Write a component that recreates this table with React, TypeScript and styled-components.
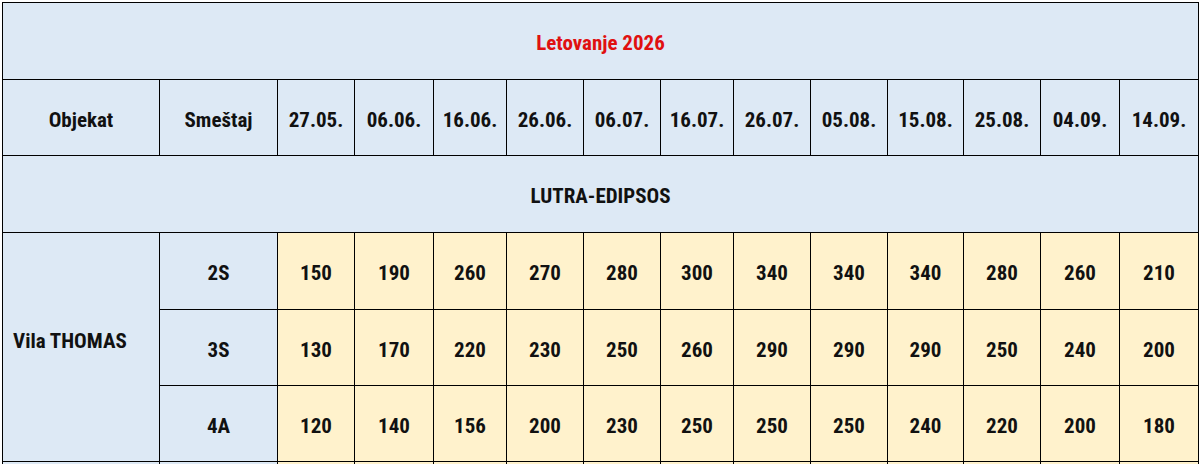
import React from 'react'
import styled, { createGlobalStyle } from 'styled-components'

const dates = ['27.05.', '06.06.', '16.06.', '26.06.', '06.07.', '16.07.', '26.07.', '05.08.', '15.08.', '25.08.', '04.09.', '14.09.']
const dateWidths = [77, 79, 73, 77, 77, 73, 77, 77, 76, 77, 79, 79]

const rooms = [
  { name: '2S', prices: [150, 190, 260, 270, 280, 300, 340, 340, 340, 280, 260, 210] },
  { name: '3S', prices: [130, 170, 220, 230, 250, 260, 290, 290, 290, 250, 240, 200] },
  { name: '4A', prices: [120, 140, 156, 200, 230, 250, 250, 250, 240, 220, 200, 180] },
]

function App(): JSX.Element {
  return (
    <>
      <GlobalStyle />
      <S.Page>
        <S.Table>
          <colgroup>
            <S.Col $w={157} />
            <S.Col $w={118} />
            {dateWidths.map((w, i) => (
              <S.Col key={i} $w={w} />
            ))}
          </colgroup>
          <tbody>
            <S.Row $h={77}>
              <S.TitleCell colSpan={14}>Letovanje 2026</S.TitleCell>
            </S.Row>
            <S.Row $h={76}>
              <S.HeadCell>Objekat</S.HeadCell>
              <S.HeadCell>Smeštaj</S.HeadCell>
              {dates.map(d => (
                <S.HeadCell key={d}>{d}</S.HeadCell>
              ))}
            </S.Row>
            <S.Row $h={77}>
              <S.HeadCell colSpan={14}>LUTRA-EDIPSOS</S.HeadCell>
            </S.Row>
            {rooms.map((room, idx) => (
              <S.Row key={room.name} $h={idx === 0 ? 77 : 76}>
                {idx === 0 && <S.HotelCell rowSpan={3}>Vila THOMAS</S.HotelCell>}
                <S.HeadCell>{room.name}</S.HeadCell>
                {room.prices.map((p, i) => (
                  <S.PriceCell key={i}>{p}</S.PriceCell>
                ))}
              </S.Row>
            ))}
            <S.Row $h={76}>
              <S.HeadCell />
              <S.HeadCell />
              {dates.map(d => (
                <S.PriceCell key={d} />
              ))}
            </S.Row>
          </tbody>
        </S.Table>
      </S.Page>
    </>
  )
}

const GlobalStyle = createGlobalStyle`
  html, body {
    margin: 0;
    padding: 0;
    background: #fff;
  }
  body {
    font-family: "Roboto Condensed", "Liberation Sans Narrow", "Arial Narrow", "DejaVu Sans Condensed", sans-serif;
    overflow: hidden;
  }
`

const S = {
  Page: styled.div`
    height: 464px;
    overflow: hidden;
    padding: 2px 0 0 2px;
    box-sizing: border-box;
  `,
  Table: styled.table`
    width: 1197px;
    table-layout: fixed;
    border-collapse: collapse;
    font-size: 21px;
    font-weight: 700;
    color: #111;
  `,
  Col: styled.col<{ $w: number }>`
    width: ${p => p.$w}px;
  `,
  Row: styled.tr<{ $h: number }>`
    height: ${p => p.$h}px;
  `,
  HeadCell: styled.td`
    border: 1px solid #000;
    background: #dde9f5;
    text-align: center;
    vertical-align: middle;
    padding: 4px 0 0;
    white-space: nowrap;
  `,
  TitleCell: styled.td`
    border: 1px solid #000;
    background: #dde9f5;
    text-align: center;
    vertical-align: middle;
    padding: 4px 0 0;
    color: #e01010;
  `,
  HotelCell: styled.td`
    border: 1px solid #000;
    background: #dde9f5;
    text-align: left;
    vertical-align: middle;
    padding: 0 0 12px 10px;
    white-space: nowrap;
  `,
  PriceCell: styled.td`
    border: 1px solid #000;
    background: #fff2cc;
    text-align: center;
    vertical-align: middle;
    padding: 4px 0 0;
  `,
}

export default App
